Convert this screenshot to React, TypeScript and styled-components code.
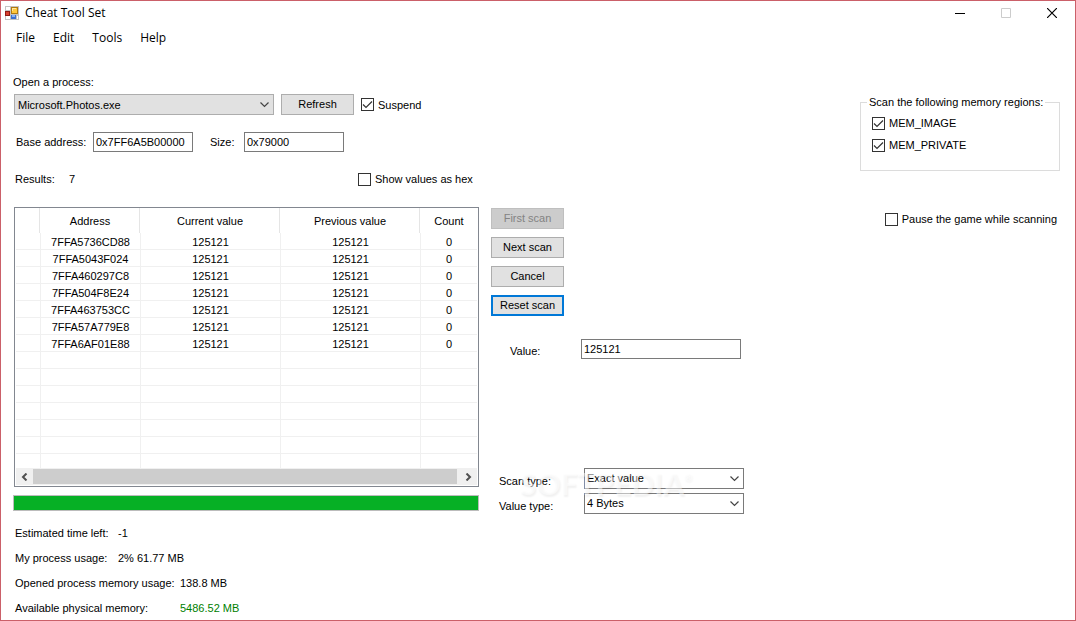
import React from "react";
import styled, { createGlobalStyle, css } from "styled-components";

const GlobalStyle = createGlobalStyle`
  *, *::before, *::after { box-sizing: border-box; }
  body { margin: 0; background: #fff; }
`;

const Window = styled.div`
  display: flex;
  flex-direction: column;
  min-height: 100vh;
  border: 1px solid #cb6069;
  background: #fff;
  color: #000;
  font-family: "Liberation Sans", Arial, sans-serif;
  font-size: 11px;
  line-height: 16px;
`;

const TitleBar = styled.header`
  display: flex;
  align-items: center;
  height: 24px;
  padding-left: 4px;
  gap: 6px;
  font-family: "Open Sans", "Segoe UI", sans-serif;
  font-size: 12px;
`;

const Title = styled.h1`
  margin: 0;
  font-size: 12px;
  font-weight: 400;
`;

const WindowButtons = styled.div`
  display: flex;
  height: 100%;
  margin-left: auto;
`;

const WindowButton = styled.button`
  display: grid;
  place-items: center;
  width: 46px;
  padding: 0;
  border: 0;
  background: transparent;
`;

const MenuBar = styled.nav`
  display: flex;
  gap: 4px;
  height: 25px;
  padding-left: 8px;
  align-items: center;
`;

const MenuItem = styled.button`
  padding: 0 7px;
  border: 0;
  background: transparent;
  color: #000;
  font-family: "Open Sans", "Segoe UI", sans-serif;
  font-size: 12px;
  line-height: 20px;
`;

const Body = styled.main`
  display: flex;
  align-items: flex-start;
  gap: 12px;
  padding: 24px 15px 0 12px;
`;

const LeftPane = styled.section`
  flex: 0 1 466px;
  min-width: 0;
`;

const ScanPane = styled.section`
  position: relative;
  flex: 0 1 253px;
  padding-top: 134px;
`;

const OptionsPane = styled.section`
  flex: 0 0 200px;
  margin-left: auto;
  padding-top: 21px;
`;

const Row = styled.div<{ $gap?: number; $top?: number; $left?: number; $align?: string }>`
  display: flex;
  align-items: ${(p) => p.$align ?? "center"};
  gap: ${(p) => p.$gap ?? 0}px;
  margin-top: ${(p) => p.$top ?? 0}px;
  padding-left: ${(p) => p.$left ?? 0}px;
`;

const Label = styled.label<{ $width?: number }>`
  flex: none;
  white-space: nowrap;
  ${(p) => p.$width && css`width: ${p.$width}px;`}
`;

const TextField = styled.input<{ $width: number }>`
  width: ${(p) => p.$width}px;
  height: 20px;
  padding: 0 2px;
  border: 1px solid #7a7a7a;
  border-radius: 0;
  background: #fff;
  color: #000;
  font: inherit;
`;

const SelectFrame = styled.div<{ $width: number }>`
  display: grid;
  align-items: center;
  width: ${(p) => p.$width}px;

  & > * { grid-area: 1 / 1; }
  & > svg { justify-self: end; margin-right: 4px; pointer-events: none; }
`;

const SelectBox = styled.select<{ $gray?: boolean }>`
  appearance: none;
  width: 100%;
  height: 21px;
  padding: ${(p) => (p.$gray ? "0 3px" : "0 2px 2px")};
  border: 1px solid ${(p) => (p.$gray ? "#adadad" : "#7a7a7a")};
  border-radius: 0;
  background: ${(p) => (p.$gray ? "#e1e1e1" : "#fff")};
  color: #000;
  font: inherit;
`;

const Button = styled.button<{ $focused?: boolean }>`
  width: 73px;
  height: 21px;
  padding: 0 0 2px;
  border: ${(p) => (p.$focused ? "2px solid #0078d7" : "1px solid #adadad")};
  border-radius: 0;
  background: #e1e1e1;
  color: #000;
  font: inherit;
  white-space: nowrap;

  &:disabled {
    border-color: #bfbfbf;
    background: #ccc;
    color: #838383;
  }
`;

const ButtonStack = styled.div`
  display: flex;
  flex-direction: column;
  align-items: flex-start;
  gap: 8px;
`;

const CheckLabel = styled.label`
  display: flex;
  align-items: center;
  gap: 4px;
  white-space: nowrap;
`;

const CheckFrame = styled.span`
  display: grid;
  place-items: center;

  & > * { grid-area: 1 / 1; }
  & > svg { display: none; pointer-events: none; }
  & > input:checked + svg { display: block; }
`;

const CheckBox = styled.input`
  appearance: none;
  width: 13px;
  height: 13px;
  margin: 0;
  border: 1px solid #333;
  border-radius: 0;
  background: #fff;
`;

const GridFrame = styled.div`
  margin: 20px 0 0 1px;
  padding: 0 1px 1px;
  border: 1px solid #828790;
`;

const GridClip = styled.div`
  height: 260px;
  overflow: hidden;
`;

const ResultsTable = styled.table`
  width: 100%;
  table-layout: fixed;
  border-collapse: separate;
  border-spacing: 0;
  text-align: center;

  th, td { padding: 0; }

  th {
    height: 25px;
    font-weight: 400;
  }

  th:not(:last-child) {
    padding-right: 2px;
    background: linear-gradient(#e5e5e5, #e5e5e5) right 1px top / 1px 100% no-repeat;
  }

  td {
    height: 17px;
    padding-top: 2px;
    border-bottom: 1px solid #f0f0f0;
    line-height: 14px;
  }

  td:not(:last-child) { border-right: 1px solid #f0f0f0; }
`;

const ScrollBar = styled.div`
  display: flex;
  height: 17px;
  background: #f0f0f0;
`;

const ScrollArrow = styled.button`
  display: grid;
  place-items: center;
  flex: 0 0 17px;
  padding: 0;
  border: 0;
  background: #f0f0f0;
`;

const ScrollThumb = styled.div`
  flex: 1;
  margin-right: 3px;
  border: solid #f0f0f0;
  border-width: 1px 0;
  background: #cdcdcd;
`;

const Progress = styled.div`
  height: 16px;
  margin-top: 8px;
  border: 1px solid #bcbcbc;
  background: #06b025;
`;

const Stats = styled.dl`
  margin: 9px 0 0 2px;
`;

const Stat = styled.div`
  display: flex;
  height: 25px;
  align-items: center;
`;

const StatName = styled.dt<{ $wide?: boolean }>`
  width: ${(p) => (p.$wide ? 165 : 103)}px;
`;

const StatValue = styled.dd<{ $good?: boolean }>`
  margin: 0;
  color: ${(p) => (p.$good ? "#008000" : "#000")};
`;

const RegionGroup = styled.fieldset`
  display: flex;
  flex-direction: column;
  gap: 6px;
  height: 76px;
  margin: 0;
  padding: 6px 11px 0;
  border: 1px solid #dcdcdc;

  legend {
    margin-left: -5px;
    padding: 0 2px;
    line-height: 14px;
  }
`;

const PauseOption = styled.div`
  display: flex;
  justify-content: flex-end;
  margin-top: 40px;
  padding-right: 3px;
`;

const TypeForm = styled.div`
  position: relative;
  display: flex;
  flex-direction: column;
  gap: 4px;
  margin-top: 109px;
  padding-left: 8px;
`;

const Watermark = styled.span`
  position: absolute;
  left: 29px;
  top: -3px;
  color: rgba(255, 255, 255, 0.5);
  font-family: Lato, sans-serif;
  font-size: 30px;
  font-weight: 700;
  line-height: 36px;
  text-shadow: 1px 2px 2px rgba(0, 0, 0, 0.06);
  pointer-events: none;

  sup { font-size: 10px; line-height: 10px; vertical-align: 14px; }
`;

const AppIcon = () => (
  <svg width="14" height="14" viewBox="0 0 14 14" shapeRendering="crispEdges" aria-hidden="true">
    <rect width="14" height="14" fill="#c3c3c3" />
    <path d="M1 1h4v3H1zM1 10h4v3H1zM12 10h1v3h-1z" fill="#fff" />
    <rect x="6" y="1" width="7" height="7" fill="#b07a10" />
    <rect x="7" y="2" width="5" height="5" fill="#ffc83c" />
    <path d="M7 2h4v1H8v2H7z" fill="#ffe9a0" />
    <rect x="0" y="5" width="5" height="5" fill="#8f1b14" />
    <rect x="1" y="6" width="3" height="3" fill="#d8402f" />
    <rect x="6" y="9" width="5" height="4" fill="#3b6fd0" />
    <rect x="7" y="9" width="3" height="2" fill="#86b2f5" />
  </svg>
);

const Chevron = () => (
  <svg width="10" height="6" viewBox="0 0 10 6" fill="none" stroke="#444" strokeWidth="1.2" aria-hidden="true">
    <path d="M0.5 0.5l4 4 4-4" />
  </svg>
);

const CheckMark = () => (
  <svg width="11" height="11" viewBox="0 0 11 11" fill="none" stroke="#333" strokeWidth="1.2" aria-hidden="true">
    <path d="M1 5.5L4 8.5l6-6" />
  </svg>
);

const Arrow = ({ d }: { d: string }) => (
  <svg width="7" height="8" viewBox="0 0 7 8" fill="none" stroke="#505050" strokeWidth="2" aria-hidden="true">
    <path d={d} />
  </svg>
);

function Check({ text, checked }: { text: string; checked?: boolean }) {
  return (
    <CheckLabel>
      <CheckFrame>
        <CheckBox type="checkbox" defaultChecked={checked} />
        <CheckMark />
      </CheckFrame>
      {text}
    </CheckLabel>
  );
}

function Select({ id, width, gray, options }: { id: string; width: number; gray?: boolean; options: string[] }) {
  return (
    <SelectFrame $width={width}>
      <SelectBox id={id} $gray={gray}>
        {options.map((o) => (
          <option key={o}>{o}</option>
        ))}
      </SelectBox>
      <Chevron />
    </SelectFrame>
  );
}

const addresses = [
  "7FFA5736CD88",
  "7FFA5043F024",
  "7FFA460297C8",
  "7FFA504F8E24",
  "7FFA463753CC",
  "7FFA57A779E8",
  "7FFA6AF01E88",
];
const rows = Array.from({ length: 14 }, (_, i) =>
  addresses[i] ? [addresses[i], "125121", "125121", "0"] : ["", "", "", ""]
);

export default function App() {
  return (
    <Window>
      <GlobalStyle />
      <TitleBar>
        <AppIcon />
        <Title>Cheat Tool Set</Title>
        <WindowButtons>
          <WindowButton aria-label="Minimize">
            <svg width="10" height="10" viewBox="0 0 10 10" stroke="#000"><path d="M0 5.5h10" /></svg>
          </WindowButton>
          <WindowButton aria-label="Maximize" disabled>
            <svg width="10" height="10" viewBox="0 0 10 10" fill="none" stroke="#ccc"><path d="M.5.5h9v9h-9z" /></svg>
          </WindowButton>
          <WindowButton aria-label="Close">
            <svg width="10" height="10" viewBox="0 0 10 10" stroke="#000" strokeWidth="1.2"><path d="M0 0l10 10M10 0L0 10" /></svg>
          </WindowButton>
        </WindowButtons>
      </TitleBar>
      <MenuBar>
        {["File", "Edit", "Tools", "Help"].map((m) => (
          <MenuItem key={m}>{m}</MenuItem>
        ))}
      </MenuBar>
      <Body>
        <LeftPane>
          <Label htmlFor="process">Open a process:</Label>
          <Row $top={4} $left={1} $gap={7}>
            <Select id="process" width={260} gray options={["Microsoft.Photos.exe"]} />
            <Button>Refresh</Button>
            <Check text="Suspend" checked />
          </Row>
          <Row $top={17} $left={3}>
            <Label htmlFor="base" $width={77}>Base address:</Label>
            <TextField id="base" $width={100} defaultValue="0x7FF6A5B00000" />
            <Row $left={17}>
              <Label htmlFor="size" $width={34}>Size:</Label>
              <TextField id="size" $width={100} defaultValue="0x79000" />
            </Row>
          </Row>
          <Row $top={19} $left={2}>
            <Label as="span" $width={54}>Results:</Label>
            <Label as="output" $width={289}>7</Label>
            <Check text="Show values as hex" />
          </Row>
          <GridFrame>
            <GridClip>
              <ResultsTable>
                <colgroup>
                  <col width="25" />
                  <col width="100" />
                  <col width="140" />
                  <col width="140" />
                  <col />
                </colgroup>
                <thead>
                  <tr>
                    <th />
                    <th>Address</th>
                    <th>Current value</th>
                    <th>Previous value</th>
                    <th>Count</th>
                  </tr>
                </thead>
                <tbody>
                  {rows.map((cells, i) => (
                    <tr key={i}>
                      <td />
                      {cells.map((c, j) => (
                        <td key={j}>{c}</td>
                      ))}
                    </tr>
                  ))}
                </tbody>
              </ResultsTable>
            </GridClip>
            <ScrollBar>
              <ScrollArrow aria-label="Scroll left"><Arrow d="M5.5 .5L2 4l3.5 3.5" /></ScrollArrow>
              <ScrollThumb />
              <ScrollArrow aria-label="Scroll right"><Arrow d="M1.5 .5L5 4 1.5 7.5" /></ScrollArrow>
            </ScrollBar>
          </GridFrame>
          <Progress role="progressbar" aria-label="Scan progress" aria-valuenow={100} />
          <Stats>
            <Stat><StatName>Estimated time left:</StatName><StatValue>-1</StatValue></Stat>
            <Stat><StatName>My process usage:</StatName><StatValue>2% 61.77 MB</StatValue></Stat>
            <Stat><StatName $wide>Opened process memory usage:</StatName><StatValue>138.8 MB</StatValue></Stat>
            <Stat><StatName $wide>Available physical memory:</StatName><StatValue $good>5486.52 MB</StatValue></Stat>
          </Stats>
        </LeftPane>
        <ScanPane>
          <ButtonStack>
            <Button disabled>First scan</Button>
            <Button>Next scan</Button>
            <Button>Cancel</Button>
            <Button $focused>Reset scan</Button>
          </ButtonStack>
          <Row $top={23} $left={19} $align="flex-end">
            <Label htmlFor="value" $width={71}>Value:</Label>
            <TextField id="value" $width={160} defaultValue="125121" />
          </Row>
          <TypeForm>
            <Row $align="flex-end">
              <Label htmlFor="scan-type" $width={85}>Scan type:</Label>
              <Select id="scan-type" width={160} options={["Exact value"]} />
            </Row>
            <Row $align="flex-end">
              <Label htmlFor="value-type" $width={85}>Value type:</Label>
              <Select id="value-type" width={160} options={["4 Bytes"]} />
            </Row>
            <Watermark aria-hidden="true">SOFTPEDIA<sup>®</sup></Watermark>
          </TypeForm>
        </ScanPane>
        <OptionsPane>
          <RegionGroup>
            <legend>Scan the following memory regions:</legend>
            <Check text="MEM_IMAGE" checked />
            <Check text="MEM_PRIVATE" checked />
          </RegionGroup>
          <PauseOption>
            <Check text="Pause the game while scanning" />
          </PauseOption>
        </OptionsPane>
      </Body>
    </Window>
  );
}
